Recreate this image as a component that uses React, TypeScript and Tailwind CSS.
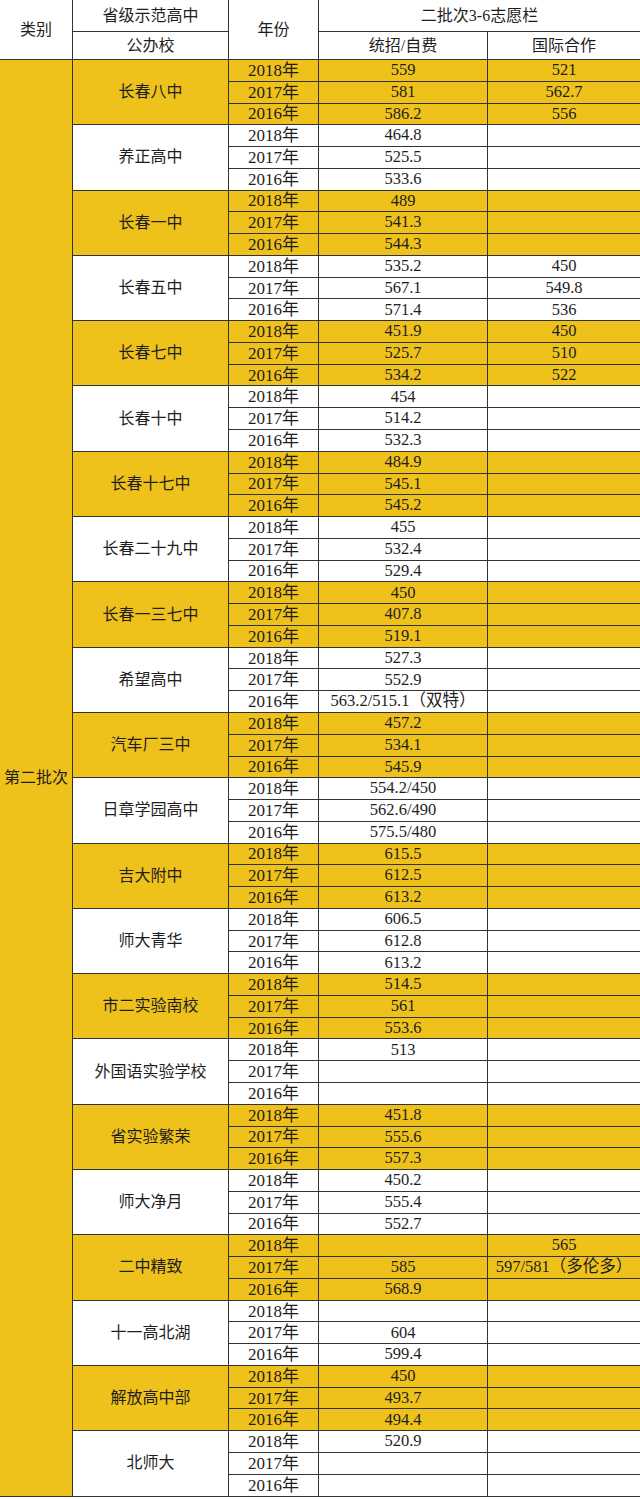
import React from 'react';

type School = {
  name: string;
  rows: [string, string][]; // 2018, 2017, 2016 -> [统招/自费, 国际合作]
};

const schools: School[] = [
  { name: '长春八中', rows: [['559', '521'], ['581', '562.7'], ['586.2', '556']] },
  { name: '养正高中', rows: [['464.8', ''], ['525.5', ''], ['533.6', '']] },
  { name: '长春一中', rows: [['489', ''], ['541.3', ''], ['544.3', '']] },
  { name: '长春五中', rows: [['535.2', '450'], ['567.1', '549.8'], ['571.4', '536']] },
  { name: '长春七中', rows: [['451.9', '450'], ['525.7', '510'], ['534.2', '522']] },
  { name: '长春十中', rows: [['454', ''], ['514.2', ''], ['532.3', '']] },
  { name: '长春十七中', rows: [['484.9', ''], ['545.1', ''], ['545.2', '']] },
  { name: '长春二十九中', rows: [['455', ''], ['532.4', ''], ['529.4', '']] },
  { name: '长春一三七中', rows: [['450', ''], ['407.8', ''], ['519.1', '']] },
  { name: '希望高中', rows: [['527.3', ''], ['552.9', ''], ['563.2/515.1（双特）', '']] },
  { name: '汽车厂三中', rows: [['457.2', ''], ['534.1', ''], ['545.9', '']] },
  { name: '日章学园高中', rows: [['554.2/450', ''], ['562.6/490', ''], ['575.5/480', '']] },
  { name: '吉大附中', rows: [['615.5', ''], ['612.5', ''], ['613.2', '']] },
  { name: '师大青华', rows: [['606.5', ''], ['612.8', ''], ['613.2', '']] },
  { name: '市二实验南校', rows: [['514.5', ''], ['561', ''], ['553.6', '']] },
  { name: '外国语实验学校', rows: [['513', ''], ['', ''], ['', '']] },
  { name: '省实验繁荣', rows: [['451.8', ''], ['555.6', ''], ['557.3', '']] },
  { name: '师大净月', rows: [['450.2', ''], ['555.4', ''], ['552.7', '']] },
  { name: '二中精致', rows: [['', '565'], ['585', '597/581（多伦多）'], ['568.9', '']] },
  { name: '十一高北湖', rows: [['', ''], ['604', ''], ['599.4', '']] },
  { name: '解放高中部', rows: [['450', ''], ['493.7', ''], ['494.4', '']] },
  { name: '北师大', rows: [['520.9', ''], ['', ''], ['', '']] },
];

const years = ['2018年', '2017年', '2016年'];

const cell = 'flex items-center justify-center border-[#333] whitespace-nowrap';

export default function App() {
  return (
    <div
      className="w-[640px] bg-white text-[#1e1e1e] text-[16px] leading-none"
      style={{ fontFamily: '"Liberation Serif", "Noto Sans CJK SC", serif' }}
    >
      <div className="grid grid-cols-[73px_156px_90px_169px_152px] grid-rows-[32px_28px_repeat(66,21.77px)]">
        {/* header */}
        <div className={`${cell} row-[span_2/span_2] border-r border-b`}>类别</div>
        <div className={`${cell} border-r border-b`}>省级示范高中</div>
        <div className={`${cell} row-[span_2/span_2] border-r border-b`}>年份</div>
        <div className={`${cell} col-[span_2/span_2] border-b`}>二批次3-6志愿栏</div>
        <div className={`${cell} col-start-2 border-r border-b`}>公办校</div>
        <div className={`${cell} col-start-4 border-r border-b`}>统招/自费</div>
        <div className={`${cell} border-b`}>国际合作</div>

        {/* category column */}
        <div className={`${cell} col-start-1 row-[span_66/span_66] bg-[#efc11b] border-r border-b`}>
          第二批次
        </div>

        {schools.map((s, i) => {
          const bg = i % 2 === 0 ? 'bg-[#efc11b]' : 'bg-white';
          const start = 3 + i * 3;
          return (
            <React.Fragment key={s.name}>
              <div
                className={`${cell} ${bg} col-start-2 row-span-3 border-r border-b`}
                style={{ gridRowStart: start }}
              >
                {s.name}
              </div>
              {s.rows.map((r, j) => (
                <React.Fragment key={j}>
                  <div
                    className={`${cell} ${bg} col-start-3 border-r border-b text-[17px]`}
                    style={{ gridRowStart: start + j }}
                  >
                    {years[j]}
                  </div>
                  <div
                    className={`${cell} ${bg} col-start-4 border-r border-b text-[16.5px]`}
                    style={{ gridRowStart: start + j }}
                  >
                    {r[0]}
                  </div>
                  <div
                    className={`${cell} ${bg} col-start-5 border-b text-[16.5px]`}
                    style={{ gridRowStart: start + j }}
                  >
                    {r[1]}
                  </div>
                </React.Fragment>
              ))}
            </React.Fragment>
          );
        })}
      </div>
    </div>
  );
}
